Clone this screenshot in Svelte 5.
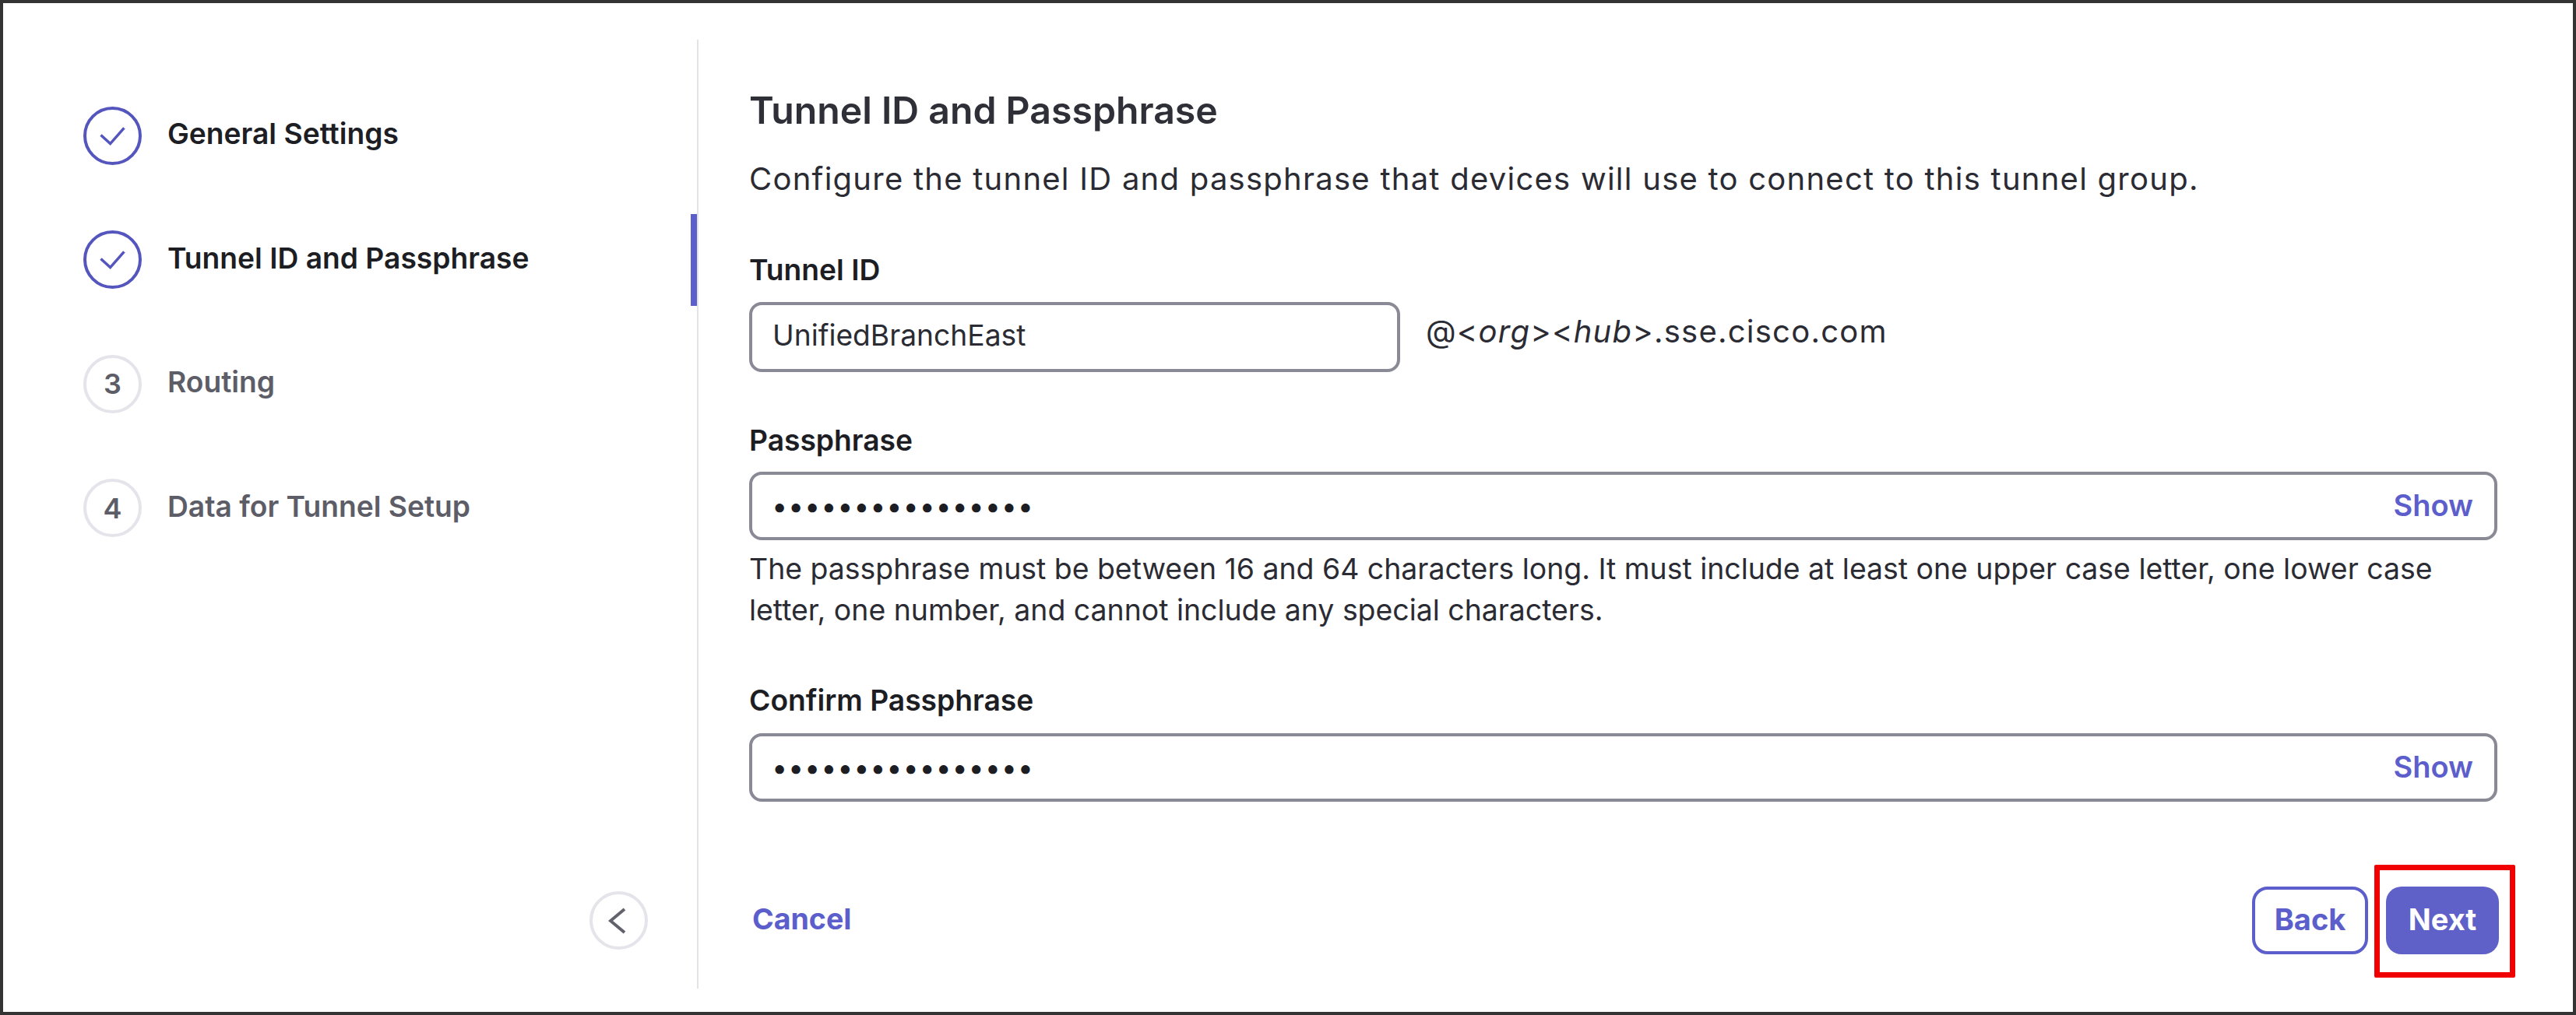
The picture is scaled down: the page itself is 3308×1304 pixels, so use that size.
<script>
  const steps = [
    { n: 1, label: 'General Settings', done: true },
    { n: 2, label: 'Tunnel ID and Passphrase', done: true, active: true },
    { n: 3, label: 'Routing' },
    { n: 4, label: 'Data for Tunnel Setup' }
  ];
  const dots = '••••••••••••••••';
</script>

<div class="page">
  <aside class="side">
    <ol class="steps">
      {#each steps as s}
        <li class="step" class:active={s.active} class:done={s.done}>
          <span class="badge">
            {#if s.done}
              <svg viewBox="0 0 75 75" width="75" height="75" aria-hidden="true">
                <circle cx="37.5" cy="37.5" r="35.5" fill="none" stroke="#5556bd" stroke-width="4" />
                <path d="M22.5 36.5 34.6 47.6 52.4 27.4" fill="none" stroke="#5556bd" stroke-width="3.5" />
              </svg>
            {:else}
              {s.n}
            {/if}
          </span>
          <span class="step-label">{s.label}</span>
        </li>
      {/each}
    </ol>
    <button class="collapse" aria-label="Collapse">
      <svg viewBox="0 0 24 36" width="24" height="36" aria-hidden="true">
        <path d="M21 3 3 18 21 33" fill="none" stroke="#62626c" stroke-width="4" />
      </svg>
    </button>
  </aside>

  <main class="main">
    <h1>Tunnel ID and Passphrase</h1>
    <p class="desc">Configure the tunnel ID and passphrase that devices will use to connect to this tunnel group.</p>

    <div class="label first">Tunnel ID</div>
    <div class="id-row">
      <div class="input short"><span class="value">UnifiedBranchEast</span></div>
      <div class="suffix">@&lt;<em>org</em>&gt;&lt;<em>hub</em>&gt;.sse.cisco.com</div>
    </div>

    <div class="label">Passphrase</div>
    <div class="input pass">
      <span class="dots">{dots}</span>
      <span class="show">Show</span>
    </div>
    <p class="hint">The passphrase must be between 16 and 64 characters long. It must include at least one upper case letter, one lower case letter, one number, and cannot include any special characters.</p>

    <div class="label confirm">Confirm Passphrase</div>
    <div class="input pass">
      <span class="dots">{dots}</span>
      <span class="show">Show</span>
    </div>

    <footer class="foot">
      <button class="cancel">Cancel</button>
      <div class="actions">
        <button class="btn back">Back</button>
        <button class="btn next">Next</button>
      </div>
    </footer>
  </main>
</div>

<style>
  :global(body) { margin: 0; background: #fff; }
  .page {
    box-sizing: border-box;
    width: 3308px;
    height: 1304px;
    border: 4px solid #333;
    background: #fff;
    display: flex;
    font-family: Inter, "Liberation Sans", sans-serif;
    padding: 47px 0 30px;
  }
  .side {
    box-sizing: border-box;
    width: 893px;
    border-right: 2px solid #e2e2e8;
    padding: 43.5px 63px 50px 0;
    display: flex;
    flex-direction: column;
  }
  .steps { list-style: none; margin: 0; padding: 0; }
  .step {
    height: 159.5px;
    display: flex;
    align-items: center;
    gap: 33px;
    padding-left: 103px;
    position: relative;
    color: #5d5d68;
  }
  .step.done { color: #1d1d24; }
  .step.active::after {
    content: "";
    position: absolute;
    right: -63px;
    top: 21px;
    width: 8px;
    height: 118px;
    background: #5c5ecb;
  }
  .badge {
    box-sizing: border-box;
    width: 75px;
    height: 75px;
    flex: none;
    border-radius: 50%;
    border: 4px solid #e4e4ea;
    display: flex;
    align-items: center;
    justify-content: center;
    font-size: 36px;
    font-weight: 600;
    color: #5d5d68;
  }
  .done .badge { border: 0; }
  .done .badge svg { display: block; }
  .step-label { font-size: 37.2px; font-weight: 600; line-height: 48px; padding-bottom: 4px; }
  .collapse {
    box-sizing: border-box;
    width: 75px;
    height: 75px;
    margin-top: auto;
    align-self: flex-end;
    border-radius: 50%;
    border: 4px solid #e4e4ea;
    background: #fff;
    padding: 0 3px 0 0;
    display: flex;
    align-items: center;
    justify-content: center;
  }
  .main {
    flex: 1;
    min-width: 0;
    box-sizing: border-box;
    padding: 61px 97px 44px 65px;
    display: flex;
    flex-direction: column;
    color: #1d1d24;
  }
  h1 {
    margin: 0;
    font-size: 48.2px;
    line-height: 60px;
    font-weight: 600;
    color: #2f2f37;
  }
  .desc {
    margin: 30px 0 0;
    font-size: 40px;
    letter-spacing: 1.25px;
    line-height: 56px;
    font-weight: 400;
    color: #2b2b33;
  }
  .label {
    font-size: 37.2px;
    line-height: 48px;
    font-weight: 600;
    margin-top: 64px;
    margin-bottom: 16px;
  }
  .label.first { margin-top: 65px; margin-bottom: 17px; }
  .label.confirm { margin-top: 66px; margin-bottom: 17.5px; }
  .id-row { display: flex; align-items: flex-start; gap: 33px; }
  .input {
    box-sizing: border-box;
    border: 4px solid #8a8a96;
    border-radius: 16px;
    display: flex;
    align-items: center;
    background: #fff;
  }
  .short { width: 836px; height: 90px; padding: 0 0 5px 26px; flex: none; }
  .pass { height: 88px; padding: 0 27px 0 25px; justify-content: space-between; }
  .value { font-size: 37.2px; color: #2b2b33; }
  .suffix { font-size: 40px; letter-spacing: 1.24px; line-height: 76px; color: #2b2b33; }
  .dots { font-size: 36px; letter-spacing: 0.8px; line-height: 1; color: #1d1d24; }
  .show { font-size: 38px; font-weight: 600; color: #5c5ecb; padding-bottom: 2px; }
  .hint {
    margin: 10px 0 0;
    font-size: 37.4px;
    line-height: 53px;
    color: #2b2b33;
  }
  .foot {
    margin-top: auto;
    display: flex;
    justify-content: space-between;
    align-items: center;
  }
  button { font-family: inherit; cursor: pointer; }
  .cancel {
    border: 0;
    background: none;
    padding: 0 0 4px 4px;
    font-size: 37.5px;
    font-weight: 700;
    color: #5c5ecb;
  }
  .actions { display: flex; gap: 23px; position: relative; margin-right: -2px; }
  .btn {
    box-sizing: border-box;
    height: 87px;
    border-radius: 20px;
    font-size: 38px;
    font-weight: 700;
    padding: 0 0 4px;
  }
  .back { width: 149px; border: 4px solid #5c5ecb; background: #fff; color: #5c5ecb; }
  .next { width: 145px; border: 0; background: #5f60c8; color: #fff; }
  .actions::after {
    content: "";
    position: absolute;
    left: 157px;
    top: -28px;
    width: 181px;
    height: 145px;
    box-sizing: border-box;
    border: 7px solid #f00000;
    border-radius: 2px;
  }
</style>
